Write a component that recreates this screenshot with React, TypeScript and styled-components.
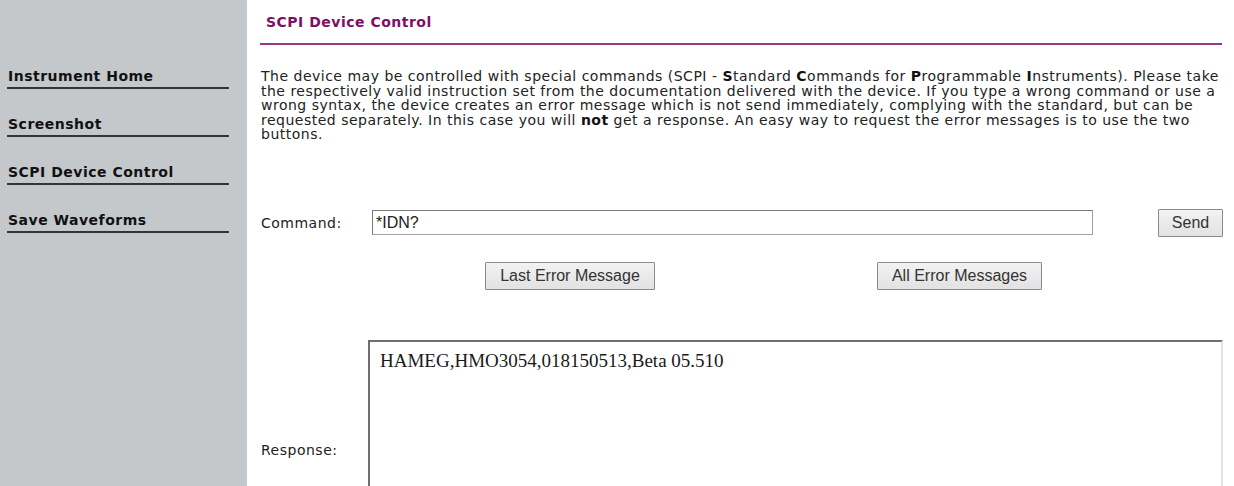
import styled, { createGlobalStyle } from 'styled-components';

const GlobalStyle = createGlobalStyle`
  html, body {
    margin: 0;
    padding: 0;
    background: #ffffff;
    overflow: hidden;
  }

  body {
    font-family: "DejaVu Sans", Verdana, sans-serif;
    font-size: 14px;
    letter-spacing: 0.5px;
    color: #222222;
  }
`;

const Page = styled.div`
  display: flex;
  height: 486px;
  overflow: hidden;
`;

const Sidebar = styled.nav`
  flex: 0 0 247px;
  background: #c5c8cb;
  padding-top: 68px;
  box-sizing: border-box;
`;

const NavItem = styled.a`
  display: block;
  width: 222px;
  margin: 0 0 27px 7px;
  padding: 0 0 3px 1px;
  box-sizing: border-box;
  border-bottom: 2px solid #333333;
  font-size: 14px;
  font-weight: bold;
  line-height: 16px;
  letter-spacing: 0.5px;
  color: #111111;
  text-decoration: none;
`;

const Main = styled.main`
  flex: 1;
  display: flex;
  flex-direction: column;
  padding: 0 12px 0 13px;
  min-width: 0;
`;

const TitleBar = styled.div`
  padding: 14px 0 13px 6px;
  border-bottom: 2px solid #99358c;
`;

const Title = styled.h1`
  margin: 0;
  font-size: 14px;
  line-height: 16px;
  font-weight: bold;
  letter-spacing: 0.5px;
  color: #7d0f63;
`;

const Intro = styled.p`
  margin: 24px 0 0;
  padding-left: 1px;
  line-height: 14.6px;
  color: #222222;

  b {
    color: #111111;
  }
`;

const CommandRow = styled.div`
  display: flex;
  align-items: center;
  height: 28px;
  margin-top: 67px;
`;

const Label = styled.label<{ $width: number }>`
  flex: 0 0 ${(p) => p.$width}px;
  padding-left: 1px;
  box-sizing: border-box;
  font-size: 14px;
  color: #222222;
`;

const CommandInput = styled.input`
  width: 721px;
  height: 25px;
  box-sizing: border-box;
  padding: 0 3px;
  border: 1px solid #a0a0a0;
  border-top-color: #7a7a7a;
  border-left-color: #7a7a7a;
  font-family: "Liberation Sans", Arial, sans-serif;
  font-size: 16px;
  letter-spacing: 0;
  color: #222222;
  outline: none;
`;

const Button = styled.button<{ $width: number }>`
  width: ${(p) => p.$width}px;
  height: 28px;
  padding: 0;
  border: 1px solid #8a8a8a;
  border-radius: 1px;
  background: linear-gradient(#f2f2f2, #e2e2e2);
  font-family: "Liberation Sans", Arial, sans-serif;
  font-size: 16px;
  letter-spacing: 0;
  color: #333333;
  cursor: pointer;
`;

const SendButton = styled(Button)`
  margin-left: auto;
  margin-right: -1px;
`;

const ButtonRow = styled.div`
  display: grid;
  grid-template-columns: 396px 383px;
  margin: 25px 0 0 112px;
  justify-items: center;
`;

const ResponseRow = styled.div`
  display: flex;
  align-items: center;
  margin-top: 50px;
`;

const ResponseBox = styled.div`
  flex: 1;
  height: 220px;
  box-sizing: border-box;
  padding: 8px 10px;
  border: 2px solid #e4e4e4;
  border-top-color: #6f6f6f;
  border-left-color: #6f6f6f;
  font-family: "Liberation Serif", "Times New Roman", serif;
  font-size: 19px;
  line-height: 22px;
  letter-spacing: 0;
  color: #1a1a1a;
  margin-right: -1px;
`;

const navLinks = ['Instrument Home', 'Screenshot', 'SCPI Device Control', 'Save Waveforms'];

export default function App() {
  return (
    <>
      <GlobalStyle />
      <Page>
        <Sidebar>
          {navLinks.map((link) => (
            <NavItem key={link} href="#">
              {link}
            </NavItem>
          ))}
        </Sidebar>
        <Main>
          <TitleBar>
            <Title>SCPI Device Control</Title>
          </TitleBar>
          <Intro>
            The device may be controlled with special commands (SCPI - <b>S</b>tandard <b>C</b>ommands for{' '}
            <b>P</b>rogrammable <b>I</b>nstruments). Please take the respectively valid instruction set from the
            documentation delivered with the device. If you type a wrong command or use a wrong syntax, the device
            creates an error message which is not send immediately, complying with the standard, but can be
            requested separately. In this case you will <b>not</b> get a response. An easy way to request the error
            messages is to use the two buttons.
          </Intro>
          <CommandRow>
            <Label $width={112}>Command:</Label>
            <CommandInput defaultValue="*IDN?" />
            <SendButton $width={65}>Send</SendButton>
          </CommandRow>
          <ButtonRow>
            <Button $width={170}>Last Error Message</Button>
            <Button $width={165}>All Error Messages</Button>
          </ButtonRow>
          <ResponseRow>
            <Label $width={108}>Response:</Label>
            <ResponseBox>HAMEG,HMO3054,018150513,Beta 05.510</ResponseBox>
          </ResponseRow>
        </Main>
      </Page>
    </>
  );
}
